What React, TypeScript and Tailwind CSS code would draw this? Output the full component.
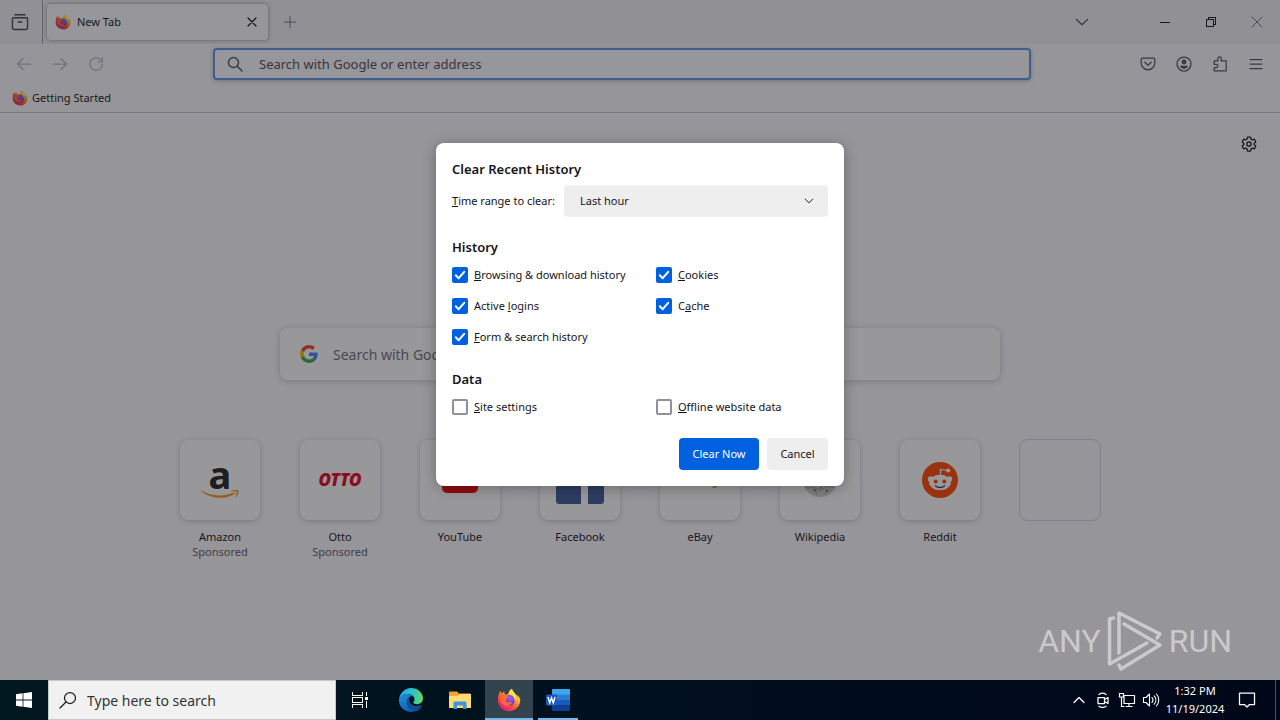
import type { ReactNode } from "react";

function FirefoxLogo({ className }: { className: string }) {
  return (
    <svg viewBox="0 0 32 32" className={className} aria-hidden="true">
      <defs>
        <linearGradient id="fxBody" x1="0.85" y1="0.1" x2="0.2" y2="0.95">
          <stop offset="0" stopColor="#fff44f" />
          <stop offset="0.3" stopColor="#ffb02e" />
          <stop offset="0.6" stopColor="#ff5634" />
          <stop offset="1" stopColor="#e31587" />
        </linearGradient>
        <radialGradient id="fxGlobe" cx="0.6" cy="0.3" r="0.8">
          <stop offset="0" stopColor="#a05cff" />
          <stop offset="1" stopColor="#4a2fb8" />
        </radialGradient>
      </defs>
      <path
        d="M30 13c-.7-1.700-2.100-3.500-3.200-4.100.9 1.800 1.500 3.600 1.700 5C26.700 9.400 23.500 7.600 21 3.600c-.9-1.500-1.100-2.600-1.100-2.600-3.100 1.800-4.300 5-4.600 7-1.400.1-2.700.4-3.900 1C9.700 8.300 9.700 5.600 10 4.500 8.300 5.300 6.900 6.500 6 7.600 5.300 6.700 5.300 4.500 5.400 3.500 4.300 4 1.400 8.200 1.300 14.500A14.800 14.800 0 0 0 16 31c9 0 15-7 15-14.600 0-1.500-.4-2.500-1-3.400z"
        fill="url(#fxBody)"
      />
      <circle cx="16.500" cy="16.500" r="7.200" fill="url(#fxGlobe)" />
      <path
        d="M4 13c2-3.500 6-4.500 8.500-2.500 1.500.2 3 .4 3.100 1 0 1.200-2.100 1.500-2.600 2.300-.4.700-.2 1.800-1.500 2.500 1 3 3.500 3.600 5.500 2.500 1.400-.8 3 0 2.500 1.200-1 2.600-4 4.400-7.500 3.700C7.500 23 4.500 19 4 13z"
        fill="#ff6a33"
      />
      <path d="M19.900 1c-3.100 1.800-4.300 5-4.600 7 5 0 8.200 3.600 8 8.500 2-2 2-5 1-7.200 2 1.700 3.500 4.500 4.200 4.600C26.700 9.400 23.500 7.600 21 3.600c-.9-1.500-1.100-2.600-1.100-2.600z" fill="#ffe14a" />
    </svg>
  );
}

function Icon({ className = "size-4", children, box = 16 }: { className?: string; children: ReactNode; box?: number }) {
  return (
    <svg
      viewBox={`0 0 ${box} ${box}`}
      className={className}
      fill="none"
      stroke="currentColor"
      strokeWidth="1.250"
      strokeLinecap="round"
      strokeLinejoin="round"
      aria-hidden="true"
    >
      {children}
    </svg>
  );
}

function TabStrip() {
  return (
    <div className="flex h-11 items-center bg-[#f0f0f4] text-[#15141a]">
      <button aria-label="Firefox View" className="flex h-11 w-[42px] items-center justify-center pr-0.5 text-[#44434e]">
        <Icon className="size-[18px]">
          <path d="M3.500 1.500h9M2.300 4.200h11.400a1 1 0 0 1 1 1v8a1.500 1.500 0 0 1-1.500 1.500H2.800a1.500 1.500 0 0 1-1.500-1.500v-8a1 1 0 0 1 1-1zM6.500 8h3" />
        </Icon>
      </button>
      <span className="h-11 w-px bg-[#9b9ba6]" />
      <div className="ml-1 flex h-9 w-[221px] items-center rounded bg-[#fbfbfd] pr-2 pl-2 shadow-[0_0_4px_rgba(0,0,0,0.4)]">
        <FirefoxLogo className="size-4" />
        <span className="ml-1.5 flex-1 text-[11px]">New Tab</span>
        <button aria-label="Close tab" className="flex size-4 items-center justify-center">
          <Icon className="size-4">
            <path d="M4 4l8 8M12 4l-8 8" />
          </Icon>
        </button>
      </div>
      <button aria-label="Open a new tab" className="ml-3 flex size-5 items-center justify-center text-[#8f8e98]">
        <Icon>
          <path d="M8 2.500v11M2.500 8h11" />
        </Icon>
      </button>
      <div className="ml-auto flex items-center">
        <button aria-label="List all tabs" className="mr-[42px] flex w-9 justify-center text-[#55545f]">
          <Icon>
            <path d="M2.500 5.500L8 10.800l5.500-5.300" />
          </Icon>
        </button>
        <button aria-label="Minimize" className="flex h-11 w-[46px] items-center justify-center">
          <Icon>
            <path d="M3 8.500h10" strokeWidth="1" shapeRendering="crispEdges" />
          </Icon>
        </button>
        <button aria-label="Restore" className="flex h-11 w-[46px] items-center justify-center">
          <Icon>
            <path d="M3.500 5.500h7v7h-7zM5.500 5.500v-2h7v7h-2" strokeWidth="1" shapeRendering="crispEdges" />
          </Icon>
        </button>
        <button aria-label="Close" className="flex h-11 w-[46px] items-center justify-center text-[#6e6d78]">
          <Icon>
            <path d="M3 3l10 10M13 3L3 13" strokeWidth="1" />
          </Icon>
        </button>
      </div>
    </div>
  );
}

function NavButton({ label, children, dim }: { label: string; children: ReactNode; dim?: boolean }) {
  return (
    <button
      aria-label={label}
      className={dim ? "flex h-8 w-9 items-center justify-center text-[#bab9c2]" : "flex h-8 w-9 items-center justify-center text-[#55545f]"}
    >
      {children}
    </button>
  );
}

function NavBar() {
  return (
    <div className="flex h-10 items-center px-1.5">
      <NavButton label="Back" dim>
        <Icon><path d="M14.500 8h-13M7 2.500L1.500 8 7 13.500" /></Icon>
      </NavButton>
      <NavButton label="Forward" dim>
        <Icon><path d="M1.500 8h13M9 2.500L14.500 8 9 13.500" /></Icon>
      </NavButton>
      <NavButton label="Reload" dim>
        <Icon><path d="M12.800 4a6.300 6.300 0 1 0 1.500 4M14.300 1.500v4.300H10" /></Icon>
      </NavButton>
      <div className="mx-[99px] flex h-8 flex-1 items-center rounded border-2 border-[#5d96e8] bg-[#fbfbfd] px-3 shadow-[0_1px_4px_rgba(0,0,0,0.25)]">
        <Icon className="size-4 text-[#55545f]">
          <circle cx="6.500" cy="6.500" r="5" strokeWidth="1.500" />
          <path d="M10.300 10.300l4.700 4.700" strokeWidth="1.500" />
        </Icon>
        <input
          aria-label="Address"
          placeholder="Search with Google or enter address"
          className="ml-4 h-full min-w-0 flex-1 bg-transparent text-[13px] outline-none placeholder:text-[#4d4c57]"
        />
      </div>
      <NavButton label="Save to Pocket">
        <Icon><path d="M2.700 2h10.600a1.500 1.500 0 0 1 1.500 1.500V7A6.800 6.800 0 0 1 1.200 7V3.500A1.500 1.500 0 0 1 2.700 2zM4.800 6.200L8 9.200l3.200-3" /></Icon>
      </NavButton>
      <NavButton label="Account">
        <Icon>
          <circle cx="8" cy="8" r="7" />
          <circle cx="8" cy="6" r="2.400" fill="currentColor" stroke="none" />
          <path d="M4 9.800h8c-.3 1.800-1.900 3-4 3s-3.700-1.200-4-3z" fill="currentColor" stroke="none" />
        </Icon>
      </NavButton>
      <NavButton label="Extensions">
        <Icon><path d="M2.200 4.900h3.700V2.600a1.700 1.700 0 0 1 3.400 0v2.300h4.900v9.900H2.200v-3.300h2a1.600 1.600 0 0 0 0-3.200h-2z" /></Icon>
      </NavButton>
      <NavButton label="Menu">
        <Icon><path d="M2 3.500h12M2 8h12M2 12.500h12" /></Icon>
      </NavButton>
    </div>
  );
}

const tile = "flex size-20 items-center justify-center rounded-lg bg-[#fdfdfe] shadow-[0_1px_5px_rgba(58,57,68,0.28)]";

function AmazonLogo() {
  return (
    <span className="flex flex-col items-center">
      <span className="h-7 text-[38px] leading-6 font-bold text-[#221f1f]">a</span>
      <svg viewBox="0 0 38 9" className="h-[9px] w-[38px]" fill="#f29c1f" aria-hidden="true">
        <path d="M.5.600C11 6.500 22 6.800 33 2.500c1-.4 1.500.5.700 1.200C26 9.300 11 10 .3 1.200-.1.800.1.400.5.600z" />
        <path d="M30 1C32.500-.2 36.500-.3 37.400.4c.7.900-.3 4.800-2.500 6.600-.4.300-.7.100-.5-.3.600-1.400 1.600-4 1.100-4.700C35 1.300 31.800 1.500 30.300 1.600 29.800 1.600 29.700 1.200 30 1z" />
      </svg>
    </span>
  );
}

function RedditLogo() {
  return (
    <svg viewBox="0 0 36 36" className="size-9" aria-hidden="true">
      <circle cx="18" cy="18" r="18" fill="#ff4500" />
      <circle cx="8.500" cy="17" r="2.700" fill="#fff" />
      <circle cx="27.500" cy="17" r="2.700" fill="#fff" />
      <ellipse cx="18" cy="20.500" rx="11" ry="7.800" fill="#fff" />
      <path d="M18.500 13V7.500l7.500 1" fill="none" stroke="#fff" strokeWidth="1.200" />
      <circle cx="26.200" cy="8.500" r="2" fill="#fff" />
      <circle cx="13.700" cy="19.500" r="2" fill="#ff4500" />
      <circle cx="22.300" cy="19.500" r="2" fill="#ff4500" />
      <path d="M13.500 24c2.500 2 6.500 2 9 0" fill="none" stroke="#2b3c68" strokeWidth="1.400" strokeLinecap="round" />
    </svg>
  );
}

const sites: { name: string; sponsored?: boolean; logo: ReactNode }[] = [
  { name: "Amazon", sponsored: true, logo: <AmazonLogo /> },
  { name: "Otto", sponsored: true, logo: <span className="text-[17px] font-black text-[#e3001b] italic">OTTO</span> },
  {
    name: "YouTube",
    logo: (
      <svg viewBox="0 0 36 26" className="h-[26px] w-9" aria-hidden="true">
        <rect width="36" height="26" rx="5" fill="#f00000" />
        <path d="M14 8v10l9-5z" fill="#fff" />
      </svg>
    ),
  },
  {
    name: "Facebook",
    logo: (
      <svg viewBox="0 0 48 48" className="size-12" aria-hidden="true">
        <rect width="48" height="48" rx="3" fill="#3b5998" />
        <path d="M25 48V29h-6v-7h6v-5c0-6 4-9 9-9h5v7h-3c-3 0-4 1.500-4 4v3h7l-1 7h-6v19z" fill="#fff" />
      </svg>
    ),
  },
  {
    name: "eBay",
    logo: (
      <span className="pb-2 text-xl leading-none">
        <span className="text-[#e53238]">e</span>
        <span className="text-[#0064d2]">b</span>
        <span className="text-[#f5af02]">a</span>
        <span className="text-[#86b817]">y</span>
      </span>
    ),
  },
  {
    name: "Wikipedia",
    logo: (
      <svg viewBox="0 0 36 34" className="h-[34px] w-9" aria-hidden="true">
        <circle cx="18" cy="17" r="17" fill="#cfcfcf" />
        <path d="M3 24c4 3 7-1 10 1s5 3 9 0 7 1 11-2M13 26l2 6M25 26l-2 5" fill="none" stroke="#a3a2a8" strokeWidth="1" />
        <path d="M11 26l3 1.500-2 1zM24 27l2.500.5-1.500 2zM18 24l2 .5-1 1.500z" fill="#55545a" />
      </svg>
    ),
  },
  { name: "Reddit", logo: <RedditLogo /> },
];

function NewTabPage() {
  return (
    <main className="flex-1 border-t border-[#c5c5ce]">
      <div className="flex justify-end pt-[23px] pr-[23px]">
        <button aria-label="Personalize new tab" className="size-4 text-[#15141a]">
          <Icon>
            <path d="M6.500 1h3l.5 2.100 1.200.7 2.100-.7 1.500 2.600-1.500 1.500v1.600l1.500 1.500-1.500 2.600-2.100-.7-1.200.7-.5 2.100h-3L6 12.900l-1.200-.7-2.100.7-1.500-2.600 1.500-1.500V7.200L1.200 5.700l1.500-2.600 2.100.7L6 3.100z" />
            <circle cx="8" cy="8" r="2.200" />
          </Icon>
        </button>
      </div>
      <div className="mx-auto mt-44 flex h-[52px] w-full max-w-[720px] items-center rounded-lg bg-[#fdfdfe] px-5 shadow-[0_1px_6px_rgba(58,57,68,0.28)]">
        <svg viewBox="0 0 48 48" className="size-[18px]" aria-hidden="true">
          <path fill="#EA4335" d="M24 9.500c3.540 0 6.710 1.220 9.210 3.600l6.850-6.850C35.900 2.380 30.470 0 24 0 14.620 0 6.510 5.380 2.560 13.220l7.980 6.190C12.430 13.720 17.740 9.500 24 9.500z" />
          <path fill="#4285F4" d="M46.980 24.550c0-1.570-.15-3.090-.38-4.550H24v9.020h12.940c-.58 2.960-2.260 5.480-4.780 7.180l7.730 6c4.510-4.180 7.090-10.360 7.090-17.650z" />
          <path fill="#FBBC05" d="M10.530 28.590c-.48-1.450-.76-2.990-.76-4.590s.27-3.140.76-4.590l-7.980-6.190C.92 16.460 0 20.120 0 24c0 3.880.92 7.540 2.560 10.780l7.970-6.190z" />
          <path fill="#34A853" d="M24 48c6.480 0 11.930-2.130 15.890-5.810l-7.730-6c-2.150 1.450-4.920 2.300-8.160 2.300-6.260 0-11.570-4.220-13.470-9.910l-7.980 6.190C6.510 42.620 14.620 48 24 48z" />
        </svg>
        <input
          aria-label="Search with Google"
          placeholder="Search with Google or enter address"
          className="ml-[15px] h-full min-w-0 flex-1 bg-transparent text-sm outline-none placeholder:text-[#6f6e79]"
        />
      </div>
      <ul className="mx-auto mt-[60px] grid w-full max-w-[960px] grid-cols-8 text-center text-[11px]">
        {sites.map((site) => (
          <li key={site.name}>
            <a href={`#${site.name.toLowerCase()}`} className="flex flex-col items-center">
              <span className={tile}>{site.logo}</span>
              <span className="mt-2 leading-[17px]">{site.name}</span>
              {site.sponsored && <span className="leading-[14px] text-[#5b5b66]">Sponsored</span>}
            </a>
          </li>
        ))}
        <li className="flex justify-center">
          <span className="-mt-px size-[82px] shrink-0 rounded-lg border border-[#d6d6de]" />
        </li>
      </ul>
    </main>
  );
}

function CheckOption({ id, checked, children }: { id: string; checked?: boolean; children: ReactNode }) {
  return (
    <div className="flex h-5 items-center gap-1.5">
      <span className="grid size-4">
        <input
          id={id}
          type="checkbox"
          defaultChecked={checked}
          className="peer col-start-1 row-start-1 size-4 appearance-none rounded-xs border-2 border-[#8f8f9d] bg-white checked:border-[#0061e0] checked:bg-[#0061e0]"
        />
        <svg
          viewBox="0 0 16 16"
          className="pointer-events-none invisible col-start-1 row-start-1 size-4 peer-checked:visible"
          fill="none"
          stroke="#fff"
          strokeWidth="2"
          strokeLinecap="round"
          strokeLinejoin="round"
          aria-hidden="true"
        >
          <path d="M3.800 8.300l2.900 2.900 5.500-6.400" />
        </svg>
      </span>
      <label htmlFor={id}>{children}</label>
    </div>
  );
}

function ClearHistoryDialog() {
  return (
    <div
      role="dialog"
      aria-labelledby="dialog-title"
      className="w-[408px] rounded-lg bg-white p-4 text-[11px] text-[#15141a] shadow-[0_2px_14px_rgba(0,0,0,0.3)]"
    >
      <h1 id="dialog-title" className="text-[13px] leading-5 font-semibold">Clear Recent History</h1>
      <div className="mt-1.5 flex items-center gap-2">
        <label htmlFor="range" className="w-26 whitespace-nowrap"><u>T</u>ime range to clear:</label>
        <div className="grid h-8 flex-1 items-center">
          <select id="range" className="col-start-1 row-start-1 h-8 w-full appearance-none rounded bg-[#eeeeef] px-4">
            <option>Last hour</option>
            <option>Last two hours</option>
            <option>Last four hours</option>
            <option>Today</option>
            <option>Everything</option>
          </select>
          <Icon className="pointer-events-none col-start-1 row-start-1 mr-[13px] size-3 justify-self-end">
            <path d="M3 5.500l5 5 5-5" />
          </Icon>
        </div>
      </div>
      <h2 className="mt-5 text-[13px] leading-5 font-semibold">History</h2>
      <div className="mt-2 grid grid-cols-[204px_1fr] gap-y-[11px]">
        <CheckOption id="browsing" checked><u>B</u>rowsing &amp; download history</CheckOption>
        <CheckOption id="cookies" checked><u>C</u>ookies</CheckOption>
        <CheckOption id="logins" checked>Active <u>l</u>ogins</CheckOption>
        <CheckOption id="cache" checked>C<u>a</u>che</CheckOption>
        <CheckOption id="forms" checked><u>F</u>orm &amp; search history</CheckOption>
      </div>
      <h2 className="mt-[22px] text-[13px] leading-5 font-semibold">Data</h2>
      <div className="mt-2 grid grid-cols-[204px_1fr]">
        <CheckOption id="settings"><u>S</u>ite settings</CheckOption>
        <CheckOption id="offline"><u>O</u>ffline website data</CheckOption>
      </div>
      <div className="mt-[21px] flex justify-end gap-2">
        <button className="h-8 w-20 rounded bg-[#0061e0] text-white">Clear Now</button>
        <button className="h-8 w-[61px] rounded bg-[#eeeeef]">Cancel</button>
      </div>
    </div>
  );
}

function Watermark() {
  return (
    <div className="pointer-events-none absolute right-12 bottom-2 flex items-center gap-1.5 font-['Roboto',sans-serif] text-[32px] leading-none text-white/50">
      <span>ANY</span>
      <svg viewBox="0 0 56 62" className="h-[62px] w-14" fill="none" stroke="currentColor" strokeWidth="3.500" strokeLinejoin="round" strokeLinecap="round" aria-hidden="true">
        <path d="M6.500 8L2.500 9v45L40 33" />
        <path d="M12 43V3l41 21-3 4" />
        <path d="M17 14l36 21-39 24-2-4" />
      </svg>
      <span>RUN</span>
    </div>
  );
}

function TaskButton({ label, children, state }: { label: string; children: ReactNode; state?: "active" | "open" }) {
  return (
    <button
      aria-label={label}
      className={
        state === "active"
          ? "flex h-10 w-12 items-center justify-center border-b-2 border-[#76b9ed] bg-[#33444f] pt-0.5"
          : "flex h-10 w-12 flex-col items-center justify-center"
      }
    >
      {state === "open" ? (
        <>
          <span className="flex flex-1 items-center pt-0.5">{children}</span>
          <span className="h-0.5 w-10 bg-[#76b9ed]" />
        </>
      ) : (
        children
      )}
    </button>
  );
}

function Taskbar() {
  return (
    <footer className="flex h-10 items-center bg-linear-to-r from-[#021821] to-[#000719] text-white">
      <button aria-label="Start" className="flex h-10 w-12 items-center justify-center">
        <svg viewBox="0 0 16 16" className="size-4" fill="#fff" aria-hidden="true">
          <path d="M0 2.200l6.600-.9v6.300H0zM7.400 1.200L16 0v7.600H7.400zM0 8.400h6.600v6.300L0 13.800zM7.400 8.400H16V16l-8.600-1.200z" />
        </svg>
      </button>
      <div className="flex h-10 w-72 items-center border border-[#c9c9cb] bg-[#f1f1f1] px-2.5 text-[#1b1b1b]">
        <Icon className="size-[18px]" box={18}>
          <circle cx="11" cy="7" r="5.500" />
          <path d="M7 11l-6 6" />
        </Icon>
        <input
          aria-label="Windows search"
          placeholder="Type here to search"
          className="ml-2.5 h-full min-w-0 flex-1 bg-transparent text-sm outline-none placeholder:text-[#333]"
        />
      </div>
      <TaskButton label="Task View">
        <svg viewBox="0 0 18 18" className="size-[18px]" fill="none" stroke="#fff" strokeWidth="1" shapeRendering="crispEdges" aria-hidden="true">
          <path d="M1.500 1v3.500h10V1M1.500 17v-3.500h10V17M1.500 6.500h10v5h-10zM15.500 1v4M15.500 10v7" />
          <path d="M14 6h3v3h-3z" fill="#fff" stroke="none" />
        </svg>
      </TaskButton>
      <div className="ml-[3px] flex gap-px">
        <TaskButton label="Microsoft Edge">
          <svg viewBox="0 0 24 24" className="size-6" aria-hidden="true">
            <defs>
              <linearGradient id="edgeTop" x1="0" y1="0.4" x2="1" y2="0.5">
                <stop offset="0" stopColor="#2aa9e8" />
                <stop offset="0.550" stopColor="#2ec3c8" />
                <stop offset="1" stopColor="#62d95a" />
              </linearGradient>
              <linearGradient id="edgeSide" x1="0" y1="0" x2="0.8" y2="1">
                <stop offset="0" stopColor="#2093e0" />
                <stop offset="1" stopColor="#0d4f9c" />
              </linearGradient>
            </defs>
            <path d="M0 12C.5 5 6 0 12 0c7 0 12 5 12 10.300 0 3.700-2.700 6-6.200 6-2.600 0-3.600-1-3.600-1.700 0-.8 1.300-1 1.300-3.300C15.500 8 12 5.800 8.500 6 4 6.200 1 9 0 12z" fill="url(#edgeTop)" />
            <path d="M0 12c1-4 4.500-6 8.500-6 2 0 4 .8 5.200 1.900C9.800 8 8 11 8 14c0 4.500 4 7.500 8.500 7.200 2.500-.2 4-1.200 5.400-2.200.5-.3.900.1.600.6C20.500 22.300 16.500 24 12 24 5 24-.3 18.500 0 12z" fill="url(#edgeSide)" />
            <path d="M8 14c0-2 1-4.300 2.700-5.300C9 12 11 17.500 17 18c2 .1 3.500-.4 4.500-.9.800-.4 1.300.2.800.9-1.500 2-3.800 3.200-6 3.200C11.500 21.200 8 18 8 14z" fill="#124f93" />
          </svg>
        </TaskButton>
        <TaskButton label="File Explorer">
          <svg viewBox="0 0 22 18" className="h-[18px] w-[22px]" aria-hidden="true">
            <path d="M0 1.500A1 1 0 0 1 1 .5h7l2 2h11a1 1 0 0 1 1 1V17H0z" fill="#e9a52f" />
            <path d="M0 5l9-.2 2-1.800h11v14H0z" fill="#fddb76" />
            <path d="M4.500 18v-6a1.500 1.500 0 0 1 1.500-1.500h10a1.500 1.500 0 0 1 1.500 1.500v6h-3.500v-3.500h-6V18z" fill="#3c96d9" />
          </svg>
        </TaskButton>
        <TaskButton label="Firefox" state="active">
          <FirefoxLogo className="size-6" />
        </TaskButton>
        <TaskButton label="Word" state="open">
          <svg viewBox="0 0 24 22" className="h-[22px] w-6" aria-hidden="true">
            <path d="M6 1a1 1 0 0 1 1-1h16a1 1 0 0 1 1 1v5H6z" fill="#41a5ee" />
            <path d="M6 5.500h18V11H6z" fill="#2b7cd3" />
            <path d="M6 11h18v5.500H6z" fill="#185abd" />
            <path d="M6 16.500h18V21a1 1 0 0 1-1 1H7a1 1 0 0 1-1-1z" fill="#103f91" />
            <rect y="5.500" width="11" height="11" rx="1" fill="#185abd" />
            <path d="M2 8l1.700 6L5.500 8.800 7.300 14 9 8" fill="none" stroke="#fff" strokeWidth="1.400" />
          </svg>
        </TaskButton>
      </div>
      <div className="ml-auto flex items-center">
        <button aria-label="Show hidden icons" className="flex w-6 justify-center">
          <Icon><path d="M3 10.500l5-5 5 5" /></Icon>
        </button>
        <button aria-label="Meet Now" className="flex w-6 justify-center">
          <Icon>
            <path d="M3 5.500h6.500v6H3zM9.500 7.500l3.500-2v6l-3.500-2M4 2.500c2-1.500 5-1.500 7 0M4 14.200c2 1.500 5 1.500 7 0" />
          </Icon>
        </button>
        <button aria-label="Network" className="flex w-6 justify-center">
          <Icon className="size-[18px]" box={18}>
            <path d="M6 4.500h10.500v8H6zM11 12.500v3M8 15.500h6M1.500 2.500h4v3.500h-4zM3.500 6v9.500H6" strokeWidth="1.200" />
          </Icon>
        </button>
        <button aria-label="Volume" className="flex w-6 justify-center">
          <Icon className="size-[18px]" box={18}>
            <path d="M1.500 6.500H4L7.500 3v12L4 11.500H1.500zM10 6.500c1.200 1.500 1.200 3.500 0 5M12.200 4.800c2.200 2.500 2.200 6 0 8.400M14.500 3c3 3.500 3 8.500 0 12" strokeWidth="1.100" />
          </Icon>
        </button>
        <div className="w-16 text-center text-[11px] leading-[18px] whitespace-nowrap">
          <div>1:32 PM</div>
          <div>11/19/2024</div>
        </div>
        <button aria-label="Notifications" className="flex w-10 justify-center">
          <Icon className="size-[18px]" box={18}>
            <path d="M1.500 2h15v11.500h-5L9 16l-2.500-2.500h-5z" />
          </Icon>
        </button>
        <span className="mr-1 ml-2 h-10 w-px bg-[#4a5260]" />
      </div>
    </footer>
  );
}

export default function App() {
  return (
    <div className="flex min-h-screen flex-col font-['Noto_Sans','Open_Sans',sans-serif]">
      <div className="relative flex flex-1 flex-col bg-[#f9f9fb] text-[#15141a]">
        <TabStrip />
        <NavBar />
        <div className="flex h-7 items-center px-3 text-[11px]">
          <a href="#getting-started" className="flex items-center gap-1">
            <FirefoxLogo className="size-4" />
            Getting Started
          </a>
        </div>
        <NewTabPage />
        <div className="absolute inset-0 flex items-start justify-center bg-[#1c1b22]/45 pt-[143px]">
          <ClearHistoryDialog />
        </div>
        <Watermark />
      </div>
      <Taskbar />
    </div>
  );
}
